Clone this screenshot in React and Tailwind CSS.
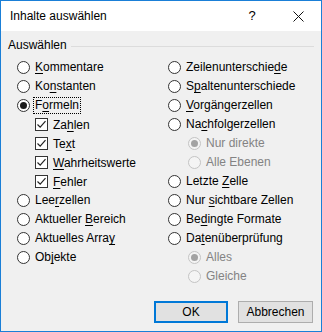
import React from 'react';

const FONT = { fontFamily: '"Segoe UI", "Liberation Sans", Arial, sans-serif' };

function Label({ text, u, disabled }) {
  if (u == null) return <span>{text}</span>;
  return (
    <span>
      {text.slice(0, u)}
      <span className="underline underline-offset-2">{text[u]}</span>
      {text.slice(u + 1)}
    </span>
  );
}

function Radio({ text, u, checked, disabled, focus, indent }) {
  return (
    <div className={`h-[19px] flex items-center gap-[4px] ${indent ? 'pl-[20px]' : ''}`}>
      <span
        className={`w-[13px] h-[13px] rounded-full border flex items-center justify-center shrink-0 ${
          disabled ? 'border-[#c4c4c4] bg-[#f4f4f4]' : 'border-[#333] bg-white'
        }`}
      >
        {checked && (
          <span className={`w-[7px] h-[7px] rounded-full ${disabled ? 'bg-[#a3a3a3]' : 'bg-[#1b1b1b]'}`} />
        )}
      </span>
      <span
        className={`px-[1px] leading-[15px] ${focus ? 'outline outline-1 outline-dotted outline-black' : ''} ${
          disabled ? 'text-[#838383]' : 'text-black'
        }`}
      >
        <Label text={text} u={u} />
      </span>
    </div>
  );
}

function Check({ text, u }) {
  return (
    <div className="h-[19px] flex items-center gap-[4px] pl-[18px]">
      <span className="w-[13px] h-[13px] border border-[#333] bg-white flex items-center justify-center shrink-0">
        <svg width="11" height="11" viewBox="0 0 11 11">
          <path d="M1.5 5.5 L4.2 8.2 L9.5 2.2" fill="none" stroke="#222" strokeWidth="1.2" />
        </svg>
      </span>
      <span className="px-[1px]">
        <Label text={text} u={u} />
      </span>
    </div>
  );
}

export default function App() {
  return (
    <div
      className="w-[322px] h-[332px] border border-[#1a7fd7] bg-[#f0f0f0] flex flex-col text-[12px] text-black"
      style={FONT}
    >
      {/* Title bar */}
      <div className="h-[30px] bg-white flex items-center pl-[9px] shrink-0">
        <span className="flex-1 text-[12px]">Inhalte auswählen</span>
        <span className="w-[46px] text-center text-[13px] mr-[0px]">?</span>
        <span className="w-[46px] flex justify-center">
          <svg width="11" height="11" viewBox="0 0 11 11">
            <path d="M0.5 0.5 L10.5 10.5 M10.5 0.5 L0.5 10.5" stroke="#111" strokeWidth="1" />
          </svg>
        </span>
      </div>

      {/* Body */}
      <div className="flex-1 flex flex-col px-[7px] pt-[7px]">
        <div className="flex items-center gap-[4px] h-[14px]">
          <span>Auswählen</span>
          <span className="flex-1 h-px bg-[#dcdcdc] mt-[2px]" />
        </div>

        <div className="flex pt-[6px] pl-[9px]">
          <div className="w-[151px] flex flex-col">
            <Radio text="Kommentare" u={0} />
            <Radio text="Konstanten" u={2} />
            <Radio text="Formeln" u={1} checked focus />
            <Check text="Zahlen" u={2} />
            <Check text="Text" u={2} />
            <Check text="Wahrheitswerte" u={0} />
            <Check text="Fehler" u={0} />
            <Radio text="Leerzellen" u={3} />
            <Radio text="Aktueller Bereich" u={10} />
            <Radio text="Aktuelles Array" u={14} />
            <Radio text="Objekte" u={2} />
          </div>
          <div className="flex flex-col">
            <Radio text="Zeilenunterschiede" u={16} />
            <Radio text="Spaltenunterschiede" u={1} />
            <Radio text="Vorgängerzellen" u={0} />
            <Radio text="Nachfolgerzellen" u={2} />
            <Radio text="Nur direkte" checked disabled indent />
            <Radio text="Alle Ebenen" disabled indent />
            <Radio text="Letzte Zelle" u={7} />
            <Radio text="Nur sichtbare Zellen" u={4} />
            <Radio text="Bedingte Formate" u={2} />
            <Radio text="Datenüberprüfung" u={2} />
            <Radio text="Alles" checked disabled indent />
            <Radio text="Gleiche" disabled indent />
          </div>
        </div>

        <div className="flex-1" />
        <div className="flex justify-end gap-[10px] pb-[8px] pr-[1px]">
          <button className="w-[74px] h-[22px] border-2 border-[#0078d7] bg-[#e1e1e1] flex items-center justify-center">
            OK
          </button>
          <button className="w-[75px] h-[22px] border border-[#adadad] bg-[#e1e1e1] flex items-center justify-center">
            Abbrechen
          </button>
        </div>
      </div>
    </div>
  );
}
